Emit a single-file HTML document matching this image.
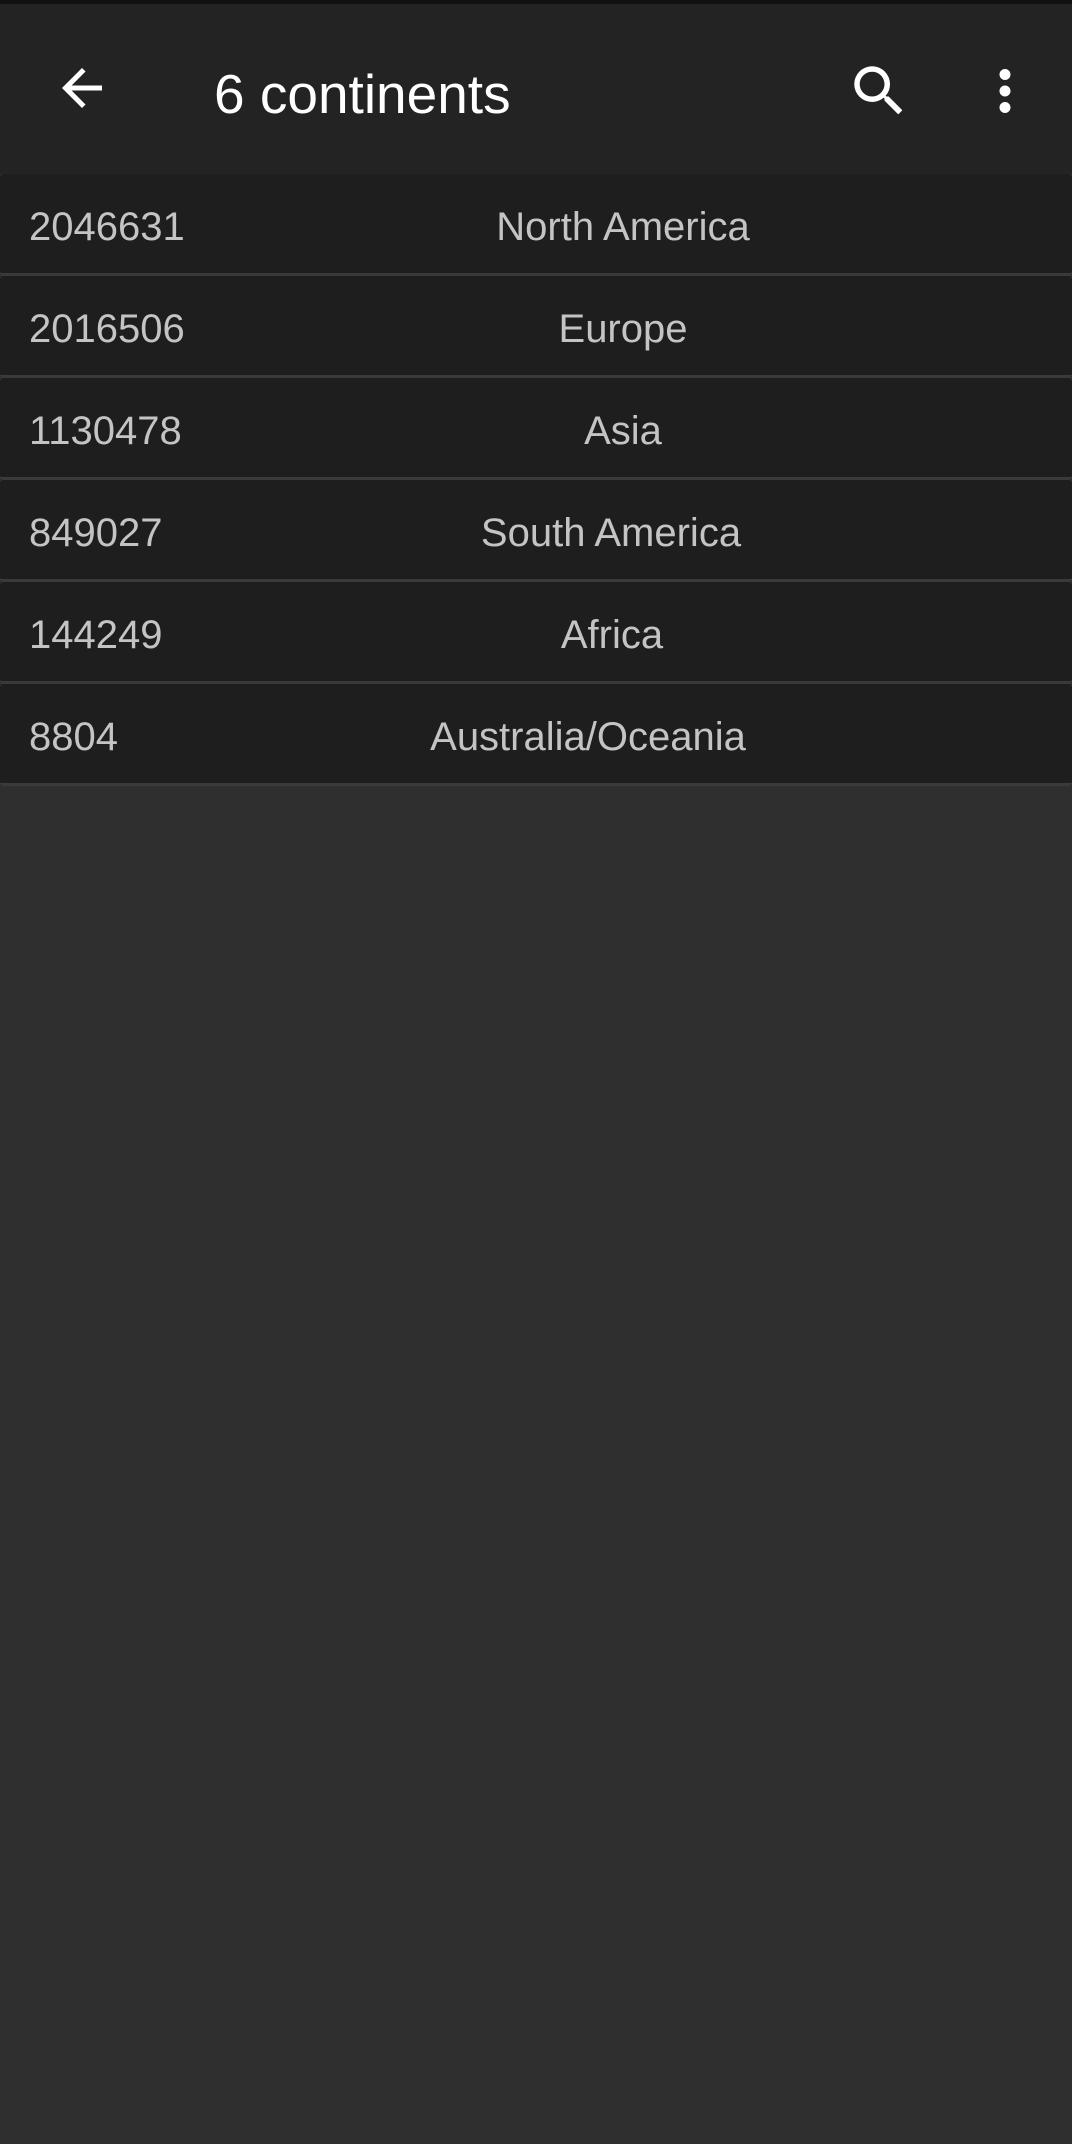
<!DOCTYPE html>
<html><head><style>
body{margin:0;width:1072px;height:2144px;background:#2f2f2f;font-family:"Liberation Sans",sans-serif;position:relative;overflow:hidden}
.top{position:absolute;left:0;top:0;width:1072px;height:4px;background:#111}
.bar{position:absolute;left:0;top:4px;width:1072px;height:170px;background:#232323}
.title{position:absolute;left:214px;top:60px;font-size:55px;color:#fff;line-height:60px}
.row{position:absolute;left:0;width:1072px;height:99px;background:#1e1e1e;border-radius:4px;border-bottom:3px solid #3a3a3a}
.n{position:absolute;left:29px;top:4px;line-height:99px;font-size:40px;color:#c4c4c4}
.c{position:absolute;top:4px;line-height:99px;font-size:40px;color:#c4c4c4;transform:translateX(-50%);white-space:nowrap}
svg{position:absolute}
</style></head><body>
<div class="top"></div>
<div class="bar">
<svg style="left:52px;top:54px" width="60" height="60" viewBox="0 0 24 24"><path d="M20 11H7.83l5.59-5.59L12 4l-8 8 8 8 1.41-1.41L7.83 13H20v-2z" fill="#fff"/></svg>
<div class="title">6 continents</div>
<svg style="left:846px;top:54px" width="66" height="66" viewBox="0 0 24 24"><path d="M15.5 14h-.79l-.28-.27A6.47 6.47 0 0 0 16 9.5 6.5 6.5 0 1 0 9.5 16c1.61 0 3.09-.59 4.23-1.57l.27.28v.79l5 4.99L20.490 19l-4.99-5zm-6 0C7.01 14 5 11.990 5 9.5S7.01 5 9.5 5 14 7.01 14 9.5 11.99 14 9.5 14z" fill="#fff"/></svg>
<svg style="left:972px;top:54px" width="66" height="66" viewBox="0 0 24 24"><path d="M12 8c1.1 0 2-.9 2-2s-.9-2-2-2-2 .9-2 2 .9 2 2 2zm0 2c-1.1 0-2 .9-2 2s.9 2 2 2 2-.9 2-2-.9-2-2-2zm0 6c-1.1 0-2 .9-2 2s.9 2 2 2 2-.9 2-2-.9-2-2-2z" fill="#fff"/></svg>
</div>
<div class="row" style="top:174px"><span class="n">2046631</span><span class="c" style="left:623px">North America</span></div>
<div class="row" style="top:276px"><span class="n">2016506</span><span class="c" style="left:623px">Europe</span></div>
<div class="row" style="top:378px"><span class="n">1130478</span><span class="c" style="left:623px">Asia</span></div>
<div class="row" style="top:480px"><span class="n">849027</span><span class="c" style="left:611px">South America</span></div>
<div class="row" style="top:582px"><span class="n">144249</span><span class="c" style="left:612px">Africa</span></div>
<div class="row" style="top:684px"><span class="n">8804</span><span class="c" style="left:588px">Australia/Oceania</span></div>
</body></html>
